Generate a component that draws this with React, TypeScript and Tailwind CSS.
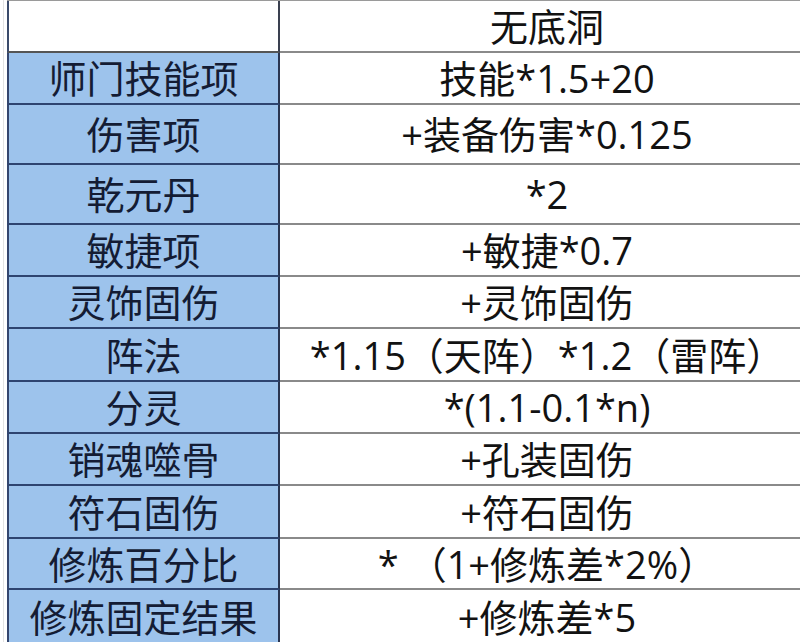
import React from "react";

const rows: { k: string; v: string; h: string }[] = [
  { k: "师门技能项", v: "技能*1.5+20", h: "h-[52px]" },
  { k: "伤害项", v: "+装备伤害*0.125", h: "h-[60px]" },
  { k: "乾元丹", v: "*2", h: "h-[60px]" },
  { k: "敏捷项", v: "+敏捷*0.7", h: "h-[52px]" },
  { k: "灵饰固伤", v: "+灵饰固伤", h: "h-[52px]" },
  { k: "阵法", v: "*1.15（天阵）*1.2（雷阵）", h: "h-[53px]" },
  { k: "分灵", v: "*(1.1-0.1*n)", h: "h-[52px]" },
  { k: "销魂噬骨", v: "+孔装固伤", h: "h-[52px]" },
  { k: "符石固伤", v: "+符石固伤", h: "h-[53px]" },
  { k: "修炼百分比", v: "* （1+修炼差*2%）", h: "h-[51px]" },
  { k: "修炼固定结果", v: "+修炼差*5", h: "h-[53px]" },
];

export default function App() {
  return (
    <div
      className="w-[800px] h-[642px] overflow-hidden bg-white"
      style={{ fontFamily: '"Open Sans", "Noto Sans CJK SC", sans-serif' }}
    >
      <div className="flex w-[826px]">
        <div className="w-[7px] shrink-0 flex">
          <div className="ml-[3px] w-px bg-[#e2e2e2]" />
        </div>
        <div className="flex flex-col w-[819px] border-t border-[#9a9a9a]">
          <div className="flex h-[52px]">
            <div className="w-[273px] shrink-0 bg-white border-l-2 border-r-2 border-b-2 border-l-[#3a4a6a] border-r-[#3a4050] border-b-[#555]" />
            <div className="flex-1 flex items-center justify-center border-b-2 border-[#8a8a8a] text-[38px] leading-none text-[#121212] pr-[12px]">
              无底洞
            </div>
          </div>
          {rows.map((r, i) => (
            <div key={i} className={`flex ${r.h}`}>
              <div
                className={`w-[273px] shrink-0 bg-[#9dc3ec] border-l-2 border-r-2 border-l-[#34466e] border-r-[#2a3550] flex items-center justify-center text-[38px] leading-none text-[#141c34] ${
                  i === rows.length - 1 ? "" : "border-b-2 border-b-[#2e4470]"
                }`}
              >
                {r.k}
              </div>
              <div
                className={`flex-1 flex items-center justify-center text-[38px] leading-none text-[#121212] whitespace-nowrap pr-[12px] ${
                  i === rows.length - 1 ? "" : "border-b-2 border-b-[#8a8a8a]"
                }`}
              >
                {r.v}
              </div>
            </div>
          ))}
        </div>
      </div>
    </div>
  );
}
